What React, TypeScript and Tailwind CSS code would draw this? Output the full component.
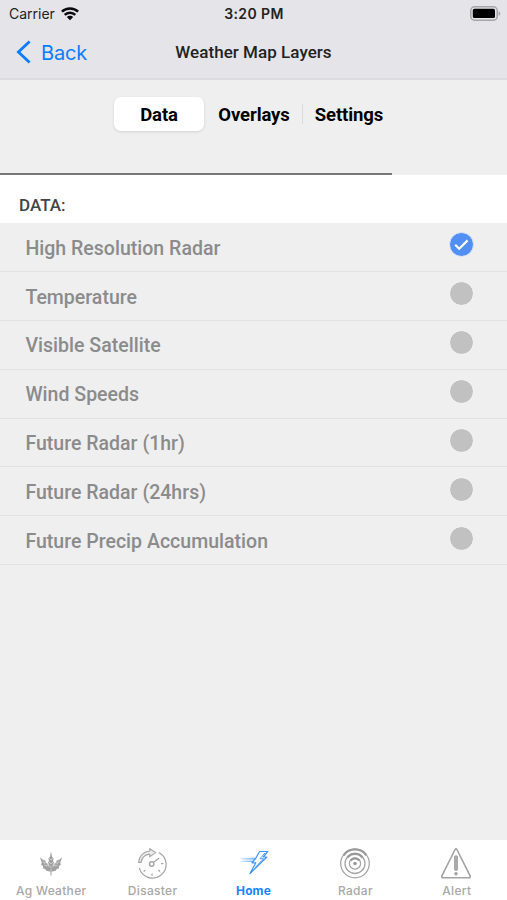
import React from 'react';

interface Layer {
    name: string;
    active?: boolean;
}

const layers: Layer[] = [
    { name: 'High Resolution Radar', active: true },
    { name: 'Temperature' },
    { name: 'Visible Satellite' },
    { name: 'Wind Speeds' },
    { name: 'Future Radar (1hr)' },
    { name: 'Future Radar (24hrs)' },
    { name: 'Future Precip Accumulation' },
];

const WifiIcon = () => (
    <svg width="18" height="14" viewBox="0 0 18 14" fill="none" stroke="#0a0a0a" strokeWidth="2.5">
        <path d="M0.9 4.6C5.3 0.3 12.7 0.3 17.1 4.6" />
        <path d="M3.7 7.9C6.7 4.9 11.3 4.9 14.3 7.9" />
        <path d="M9 13.2L5.8 10C7.5 8.2 10.5 8.2 12.2 10Z" fill="#0a0a0a" stroke="none" />
    </svg>
);

const BatteryIcon = () => (
    <svg width="31" height="15" viewBox="0 0 31 15" fill="none">
        <rect x="0.8" y="0.8" width="26.4" height="13.4" rx="3.8" stroke="#a5a5a8" strokeWidth="1.5" />
        <rect x="2.8" y="2.8" width="22.2" height="9.2" rx="1.6" fill="#000" />
        <path d="M28.6 5.2C30.8 6 30.8 9 28.6 9.8Z" fill="#a5a5a8" />
    </svg>
);

const WheatIcon = () => (
    <svg width="32" height="32" viewBox="0 0 32 32" fill="#a0a0a0">
        <path d="M15.5 12H16.5V27.5H15.5Z" />
        <path d="M16 3.5L17 8.5L18.6 10.4L18 13L19 14.2L18.1 17L18.8 18.2L16 22L13.2 18.2L13.9 17L13 14.2L14 13L13.4 10.4L15 8.5Z" />
        <path d="M4.8 9.2L8.2 12L10.8 12.8L11.2 15L13.2 16L13.2 18.3L14.9 19.8L15.8 23.8L11.3 22.8L10.2 20.9L8.2 20.4L8 18L6.2 16.8L6.7 14.2Z" />
        <path d="M27.2 9.2L23.8 12L21.2 12.8L20.8 15L18.8 16L18.8 18.3L17.1 19.8L16.2 23.8L20.7 22.8L21.8 20.9L23.8 20.4L24 18L25.8 16.8L25.3 14.2Z" />
        <path d="M14.2 10.2L16 12L17.8 10.2M13.8 14L16 16L18.2 14M14 17.6L16 19.5L18 17.6M7.7 13.5L10 15.6L10.4 13M9.4 17.2L12.2 18L12.4 16M24.3 13.5L22 15.6L21.6 13M22.6 17.2L19.8 18L19.6 16" fill="none" stroke="#fff" strokeWidth="0.45" />
    </svg>
);

const DisasterIcon = () => (
    <svg width="32" height="32" viewBox="0 0 32 32" fill="none" stroke="#a6a6a6" strokeWidth="1.2">
        <path d="M22.9 4.5A13.6 13.6 0 1 1 3.3 19.8" />
        <path d="M2.6 14.4C3.2 8 7.7 3.5 13.8 3V0.7L19.6 4.6L13.8 8.6V6.1C9.2 6.6 5.8 9.8 5.1 14.4Z" fill="#eee" strokeWidth="1.1" />
        <circle cx="15.7" cy="16" r="2.2" strokeWidth="1.5" />
        <path d="M17.5 14.4L23.2 10" />
        <path d="M25 15.7H27.4M16 25.4V27.7M7.7 23.4L9.4 21.9M22.3 22.1L24 23.6" strokeWidth="1.3" />
    </svg>
);

const HomeIcon = () => (
    <svg width="32" height="32" viewBox="0 0 32 32" fill="none">
        <defs>
            <linearGradient id="streak" x1="2" y1="0" x2="19" y2="0" gradientUnits="userSpaceOnUse">
                <stop offset="0" stopColor="#0a84ff" stopOpacity="0.1" />
                <stop offset="1" stopColor="#0a7bff" stopOpacity="0.8" />
            </linearGradient>
        </defs>
        <path d="M2.5 10.3H18.6M5 11.9H17.6M3.5 13.5H16.6" stroke="url(#streak)" strokeWidth="0.9" />
        <path d="M22.6 3.5H30.8L26.2 9H29.8L13 25.5L18.8 14.8H15L18.6 10.5Z" stroke="#4094f8" strokeWidth="1.2" strokeLinejoin="round" />
        <path d="M27.9 5L23 10.7H26.6L18.1 19.5" stroke="#4094f8" strokeWidth="0.9" />
    </svg>
);

const RadarIcon = () => (
    <svg width="32" height="32" viewBox="0 0 32 32" fill="none" stroke="#a6a6a6" strokeWidth="1.3">
        <circle cx="16" cy="15.5" r="14.3" />
        <circle cx="16" cy="15.5" r="10" />
        <circle cx="16" cy="15.5" r="5.6" />
        <circle cx="16" cy="15.5" r="1.8" fill="#999" stroke="none" />
        <path d="M4.6 7.3A14 14 0 0 1 27.4 7.3M8.3 9.7A9.7 9.7 0 0 1 23.7 9.7M11.7 12.5A5.3 5.3 0 0 1 20.3 12.5" stroke="#999" strokeWidth="2.2" />
    </svg>
);

const AlertIcon = () => (
    <svg width="32" height="32" viewBox="0 0 32 32" fill="none" stroke="#a3a3a3" strokeWidth="1.6">
        <path d="M15.1 1.5Q16 0.1 16.9 1.5L30.1 27.8Q30.7 29.7 29 29.7H3Q1.3 29.7 1.9 27.8Z" strokeLinejoin="round" />
        <rect x="14.5" y="7.8" width="3" height="14.6" rx="0.8" fill="#aaa" stroke="#a0a0a0" strokeWidth="0.8" />
        <circle cx="16" cy="25.7" r="1.7" fill="#a0a0a0" stroke="none" />
    </svg>
);

const tabs = [
    { label: 'Ag Weather', icon: <WheatIcon /> },
    { label: 'Disaster', icon: <DisasterIcon /> },
    { label: 'Home', icon: <HomeIcon />, active: true },
    { label: 'Radar', icon: <RadarIcon /> },
    { label: 'Alert', icon: <AlertIcon /> },
];

const LayerRow = ({ name, active }: Layer) => (
    <button className="flex h-[48.9px] w-full items-center justify-between border-b border-[#e2e2e3] pl-[25.4px] pr-[33px] text-left">
        <span className="pt-[3.5px] text-[19.5px] leading-6 font-medium tracking-[0.02px] text-[#8b8b8b]">{name}</span>
        {active ? (
            <span className="mb-[4.4px] flex size-[25px] items-center justify-center rounded-full border border-[#dfe8f8] bg-[#528ff5]">
                <svg width="15" height="12" viewBox="0 0 15 12" fill="none" stroke="#fff" strokeWidth="2.2">
                    <path d="M1.2 5.8L5.2 9.8L13.6 1.4" />
                </svg>
            </span>
        ) : (
            <span className="mb-[4.4px] size-[25px] rounded-full border-[1.5px] border-[#f8f8f8] bg-[#c1c1c1]"></span>
        )}
    </button>
);

const App = () => {
    return (
        <div className="flex h-[900px] w-[507px] flex-col overflow-hidden bg-[#efefef] font-['Roboto',sans-serif]">
            {/* Header */}
            <header className="h-20 shrink-0 border-b-2 border-[#dcdcdf] bg-[#e5e4e9]">
                <div className="grid h-[27px] grid-cols-[1fr_auto_1fr] items-center pl-[9px] pr-[6px] font-['Inter',sans-serif] text-[#222]">
                    <div className="flex items-center gap-[6px]">
                        <span className="text-[14px]">Carrier</span>
                        <WifiIcon />
                    </div>
                    <span className="mr-[2px] text-center text-[14px] font-semibold tracking-[0.4px]">3:20 PM</span>
                    <div className="flex justify-end">
                        <BatteryIcon />
                    </div>
                </div>
                <div className="grid h-[50px] grid-cols-[1fr_auto_1fr] items-center px-4">
                    <button className="flex items-center gap-[10px] text-[#0a7cff]">
                        <svg width="15" height="24" viewBox="0 0 15 24" fill="none" stroke="currentColor" strokeWidth="2.8">
                            <path d="M13.6 1.4L2.4 12L13.6 22.6" />
                        </svg>
                        <span className="pt-px font-['Inter',sans-serif] text-[20px] leading-6 tracking-[-0.2px]">Back</span>
                    </button>
                    <h1 className="pt-[2px] text-[17px] font-medium tracking-[0.04px] text-[#222]">Weather Map Layers</h1>
                </div>
            </header>

            {/* Segments */}
            <div className="h-[93px] shrink-0 pl-[114px] pt-[17px]">
                <div className="flex h-[34px] w-[281px] items-center text-[18.5px] font-bold tracking-[-0.1px] text-black">
                    <button className="h-full w-[90px] rounded-[7px] bg-white pt-[3px] shadow-[0_1px_3px_rgba(0,0,0,0.12)]">Data</button>
                    <button className="h-full w-[98px] pl-[2px] pt-[3px]">Overlays</button>
                    <div className="h-5 w-px bg-[#dcdcdd]"></div>
                    <button className="h-full w-[92px] pt-[3px]">Settings</button>
                </div>
            </div>
            <div className="h-[2px] w-[392px] shrink-0 bg-[#777]"></div>
            <div className="flex h-12 shrink-0 items-center bg-white pl-[19px] pt-[13px]">
                <h2 className="text-[17px] font-medium text-[#444]">DATA:</h2>
            </div>

            {/* Layers */}
            <main className="grow">
                {layers.map((layer) => (
                    <LayerRow key={layer.name} {...layer} />
                ))}
            </main>

            {/* Tab bar */}
            <nav className="grid h-[60px] shrink-0 grid-cols-5 bg-white font-['Inter',sans-serif]">
                {tabs.map((tab) => (
                    <button key={tab.label} className="flex flex-col items-center gap-[3px] pt-2">
                        {tab.icon}
                        <span className={tab.active ? 'text-[12px] leading-4 font-bold tracking-[0.1px] text-[#1c84fa]' : 'pl-px text-[12px] leading-4 font-medium tracking-[0.3px] text-[#a8a8a8]'}>
                            {tab.label}
                        </span>
                    </button>
                ))}
            </nav>
        </div>
    );
};

export default App;
